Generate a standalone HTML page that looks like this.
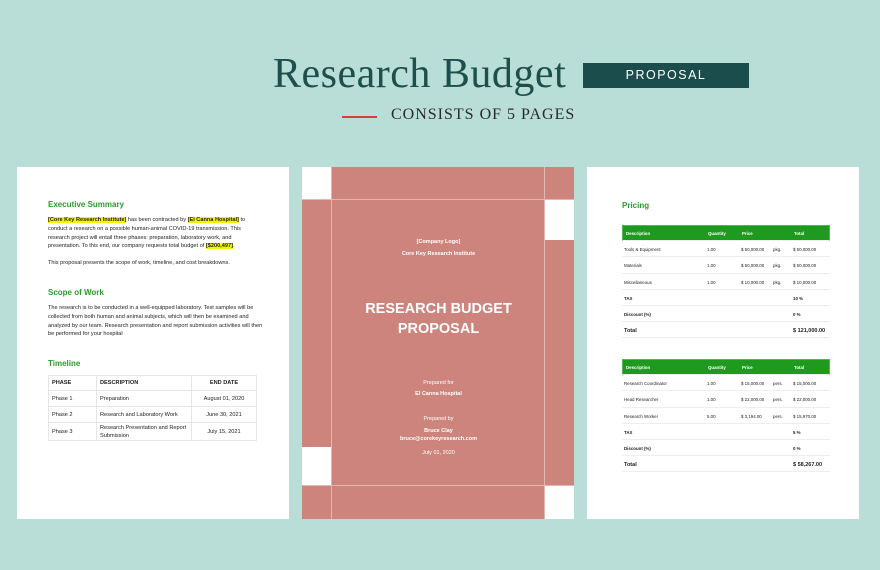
<!DOCTYPE html>
<html><head><meta charset="utf-8"><style>
*{margin:0;padding:0;box-sizing:border-box}
body{width:880px;height:570px;background:#b8ded7;position:relative;overflow:hidden;font-family:"Liberation Sans",sans-serif}
.a{position:absolute}
.page{position:absolute;background:#fff;top:167px;height:352px;width:272px}
.h{color:#2a9d2a;font-weight:bold;font-size:8px}
.t{font-size:5.6px;line-height:8.8px;color:#222}
.hl{background:#f5f500;font-weight:bold}
table{border-collapse:collapse}
.tl td{border:1px solid #e6e6e6;font-size:5.6px;padding:0 3px;height:15px;color:#222}
.pt{position:absolute;left:622px;width:208px;font-size:4.4px;color:#222}
.pt div.r{position:relative;height:16.2px;border-bottom:1px solid #eee}
.pt span{position:absolute;top:6px}
.pt .hd{background:#1e9a1e;color:#fff;font-weight:bold;height:16px;border:1px solid #4cba4c}
.pt .hd span{top:5px}
.w{color:#fff;text-align:center;position:absolute;left:332px;width:213px}
</style></head><body>
<div class="a" style="left:273px;top:50px;font-family:'Liberation Serif',serif;font-size:42px;color:#1d4f4c;letter-spacing:0.5px">Research Budget</div>
<div class="a" style="left:583px;top:63px;width:166px;height:25px;background:#1b4d4c;color:#fff;font-size:12.5px;letter-spacing:1.5px;text-align:center;line-height:25px">PROPOSAL</div>
<div class="a" style="left:342px;top:116px;width:35px;height:2px;background:#e03a3a"></div>
<div class="a" style="left:391px;top:106px;font-family:'Liberation Serif',serif;font-size:16px;color:#2a2a2a;letter-spacing:1px">CONSISTS OF 5 PAGES</div>

<div class="page" style="left:17px">
<div class="a h" style="left:31px;top:33px">Executive Summary</div>
<div class="a t" style="left:31px;top:49px;width:215px"><span class="hl">[Core Key Research Institute]</span> has been contracted by <span class="hl">[El Canna Hospital]</span> to conduct a research on a possible human-animal COVID-19 transmission. This research project will entail three phases: preparation, laboratory work, and presentation. To this end, our company requests total budget of <span class="hl">[$200,497]</span>.</div>
<div class="a t" style="left:31px;top:92px">This proposal presents the scope of work, timeline, and cost breakdowns.</div>
<div class="a h" style="left:31px;top:121px">Scope of Work</div>
<div class="a t" style="left:31px;top:137px;width:215px">The research is to be conducted in a well-equipped laboratory. Test samples will be collected from both human and animal subjects, which will then be examined and analyzed by our team. Research presentation and report submission activities will then be performed for your hospital</div>
<div class="a h" style="left:31px;top:192px">Timeline</div>
<table class="a tl" style="left:31px;top:208px;width:209px">
<tr style="font-weight:bold"><td style="width:48px;font-weight:bold">PHASE</td><td style="width:95px;font-weight:bold">DESCRIPTION</td><td style="text-align:center;font-weight:bold">END DATE</td></tr>
<tr><td style="height:16px">Phase 1</td><td>Preparation</td><td style="text-align:center">August 01, 2020</td></tr>
<tr><td style="height:16px">Phase 2</td><td>Research and Laboratory Work</td><td style="text-align:center">June 30, 2021</td></tr>
<tr><td style="height:18px">Phase 3</td><td style="line-height:8px">Research Presentation and Report Submission</td><td style="text-align:center">July 15, 2021</td></tr>
</table>
</div>

<div class="a" style="left:302px;top:167px;width:272px;height:352px;background:#cd847c"></div>
<div class="a" style="left:302px;top:167px;width:29px;height:32px;background:#fff"></div>
<div class="a" style="left:545px;top:200px;width:29px;height:40px;background:#fff"></div>
<div class="a" style="left:302px;top:447px;width:29px;height:38px;background:#fff"></div>
<div class="a" style="left:545px;top:486px;width:29px;height:33px;background:#fff"></div>
<div class="a" style="left:331px;top:167px;width:1px;height:352px;background:#e6b6b1"></div>
<div class="a" style="left:544px;top:167px;width:1px;height:352px;background:#e6b6b1"></div>
<div class="a" style="left:302px;top:199px;width:272px;height:1px;background:#e6b6b1"></div>
<div class="a" style="left:302px;top:485px;width:272px;height:1px;background:#e6b6b1"></div>
<div class="w" style="top:239px;font-size:5.5px;font-weight:bold">[Company Logo]</div>
<div class="w" style="top:251px;font-size:5.5px;font-weight:bold">Core Key Research Institute</div>
<div class="w" style="top:299px;font-size:14.5px;font-weight:bold;line-height:20px">RESEARCH BUDGET<br>PROPOSAL</div>
<div class="w" style="top:380px;font-size:5.5px">Prepared for</div>
<div class="w" style="top:391px;font-size:5.5px;font-weight:bold">El Canna Hospital</div>
<div class="w" style="top:416px;font-size:5.5px">Prepared by</div>
<div class="w" style="top:427px;font-size:5.5px;font-weight:bold;line-height:8px">Bruce Clay<br>bruce@corekeyresearch.com</div>
<div class="w" style="top:450px;font-size:5.5px">July 01, 2020</div>

<div class="page" style="left:587px"></div>
<div class="a h" style="left:622px;top:201px">Pricing</div>
<div class="pt" style="top:225px">
<div class="r hd"><span style="left:3px">Description</span><span style="left:85px">Quantity</span><span style="left:119px">Price</span><span style="left:171px">Total</span></div>
<div class="r"><span style="left:2px">Tools &amp; Equipment</span><span style="left:85px">1.00</span><span style="left:119px">$ 50,000.00</span><span style="left:151px">pkg.</span><span style="left:171px">$ 50,000.00</span></div>
<div class="r"><span style="left:2px">Materials</span><span style="left:85px">1.00</span><span style="left:119px">$ 50,000.00</span><span style="left:151px">pkg.</span><span style="left:171px">$ 50,000.00</span></div>
<div class="r"><span style="left:2px">Miscellaneous</span><span style="left:85px">1.00</span><span style="left:119px">$ 10,000.00</span><span style="left:151px">pkg.</span><span style="left:171px">$ 10,000.00</span></div>
<div class="r"><span style="left:2px;font-weight:bold">TAX</span><span style="left:171px;font-weight:bold">10 %</span></div>
<div class="r"><span style="left:2px;font-weight:bold">Discount (%)</span><span style="left:171px;font-weight:bold">0 %</span></div>
<div class="r"><span style="left:2px;font-weight:bold;font-size:5.5px">Total</span><span style="left:171px;font-weight:bold;font-size:5.5px">$ 121,000.00</span></div>
</div>
<div class="pt" style="top:359px">
<div class="r hd"><span style="left:3px">Description</span><span style="left:85px">Quantity</span><span style="left:119px">Price</span><span style="left:171px">Total</span></div>
<div class="r"><span style="left:2px">Research Coordinator</span><span style="left:85px">1.00</span><span style="left:119px">$ 15,000.00</span><span style="left:151px">pers.</span><span style="left:171px">$ 15,000.00</span></div>
<div class="r"><span style="left:2px">Head Researcher</span><span style="left:85px">1.00</span><span style="left:119px">$ 22,000.00</span><span style="left:151px">pers.</span><span style="left:171px">$ 22,000.00</span></div>
<div class="r"><span style="left:2px">Research Worker</span><span style="left:85px">5.00</span><span style="left:119px">$ 3,194.00</span><span style="left:151px">pers.</span><span style="left:171px">$ 15,970.00</span></div>
<div class="r"><span style="left:2px;font-weight:bold">TAX</span><span style="left:171px;font-weight:bold">5 %</span></div>
<div class="r"><span style="left:2px;font-weight:bold">Discount (%)</span><span style="left:171px;font-weight:bold">0 %</span></div>
<div class="r"><span style="left:2px;font-weight:bold;font-size:5.5px">Total</span><span style="left:171px;font-weight:bold;font-size:5.5px">$ 58,267.00</span></div>
</div>
</body></html>
